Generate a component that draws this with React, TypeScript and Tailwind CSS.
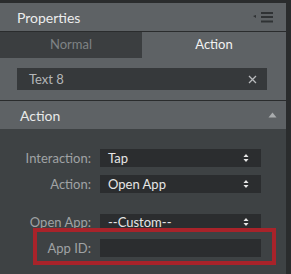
import React from "react";

function Arrows() {
  return (
    <svg width="6" height="10" viewBox="0 0 6 10" className="shrink-0">
      <path d="M3 1 L5.5 4 L0.5 4 Z" fill="#e8e8e8" />
      <path d="M3 9 L5.5 6 L0.5 6 Z" fill="#e8e8e8" />
    </svg>
  );
}

function Select({ value, h = "h-[18px]" }: { value: string; h?: string }) {
  return (
    <div className={`w-[161px] ${h} bg-[#2b2d2f] flex items-center justify-between pl-[8px] pr-[12px] text-[13px] text-[#e6e6e6]`}>
      <span className="leading-none">{value}</span>
      <Arrows />
    </div>
  );
}

function Row({ label, children }: { label: string; children: React.ReactNode }) {
  return (
    <div className="flex items-center">
      <div className="w-[100px] text-right pr-[9px] text-[13px] text-[#a0a3a5] leading-none">{label}</div>
      {children}
    </div>
  );
}

export default function App() {
  return (
    <div
      className="w-[291px] h-[274px] bg-[#2a2c2d] pt-[3px] overflow-hidden relative"
      style={{ fontFamily: 'Lato, "Open Sans", sans-serif' }}
    >
      <div className="w-[286px] h-full flex flex-col bg-[#3e4244]">
        {/* Header */}
        <div className="h-[29px] bg-[#5e6265] flex items-center justify-between pl-[17px] pr-[11px] border-b border-[#2a2c2d]">
          <span className="text-[14px] text-[#eceded]">Properties</span>
          <svg width="22" height="12" viewBox="0 0 22 12">
            <path d="M0 5 L3 4 L3 7 Z" fill="#2f3234" />
            <rect x="8" y="1" width="12" height="2" fill="#2f3234" />
            <rect x="8" y="5" width="12" height="2" fill="#2f3234" />
            <rect x="8" y="9.5" width="12" height="2" fill="#2f3234" />
          </svg>
        </div>
        {/* Tabs */}
        <div className="h-[26px] flex">
          <div className="w-[142px] bg-[#3b3e40] flex items-center justify-center text-[13px] text-[#7f8385]">Normal</div>
          <div className="flex-1 bg-[#5e6265] flex items-center justify-center text-[13px] text-[#f2f2f2]">Action</div>
        </div>
        {/* Search */}
        <div className="bg-[#5e6265] pt-[10px] pb-[10px] pl-[17px] pr-[19px] border-b border-[#2a2c2d]">
          <div className="h-[22px] bg-[#36393b] flex items-center justify-between pl-[12px] pr-[10px]">
            <span className="text-[13px] text-[#b4b6b8] leading-none">Text 8</span>
            <svg width="9" height="9" viewBox="0 0 9 9">
              <path d="M1 1 L8 8 M8 1 L1 8" stroke="#b8babc" strokeWidth="1.3" />
            </svg>
          </div>
        </div>
        {/* Section header */}
        <div className="h-[28px] bg-[#5e6265] flex items-center justify-between pl-[20px] pr-[9px]">
          <span className="text-[14px] text-[#e8e9e9]">Action</span>
          <svg width="9" height="6" viewBox="0 0 9 6">
            <path d="M4.5 0.5 L8.5 5.5 L0.5 5.5 Z" fill="#a9acae" />
          </svg>
        </div>
        {/* Content */}
        <div className="flex-1 flex flex-col pt-[20px] bg-[#3e4244]">
          <div className="flex flex-col gap-[8px]">
            <Row label="Interaction:">
              <Select value="Tap" />
            </Row>
            <Row label="Action:">
              <Select value="Open App" />
            </Row>
          </div>
          <div className="flex flex-col gap-[9px] mt-[21px]">
            <Row label="Open App:">
              <Select value="--Custom--" h="h-[16px]" />
            </Row>
            <Row label="App ID:">
              <div className="w-[161px] h-[18px] bg-[#2b2d2f]" />
            </Row>
          </div>
        </div>
      </div>
      {/* Red annotation box */}
      <div className="absolute left-[33px] top-[228px] w-[243px] h-[37px] border-[4px] border-[#a8232a]" />
    </div>
  );
}
